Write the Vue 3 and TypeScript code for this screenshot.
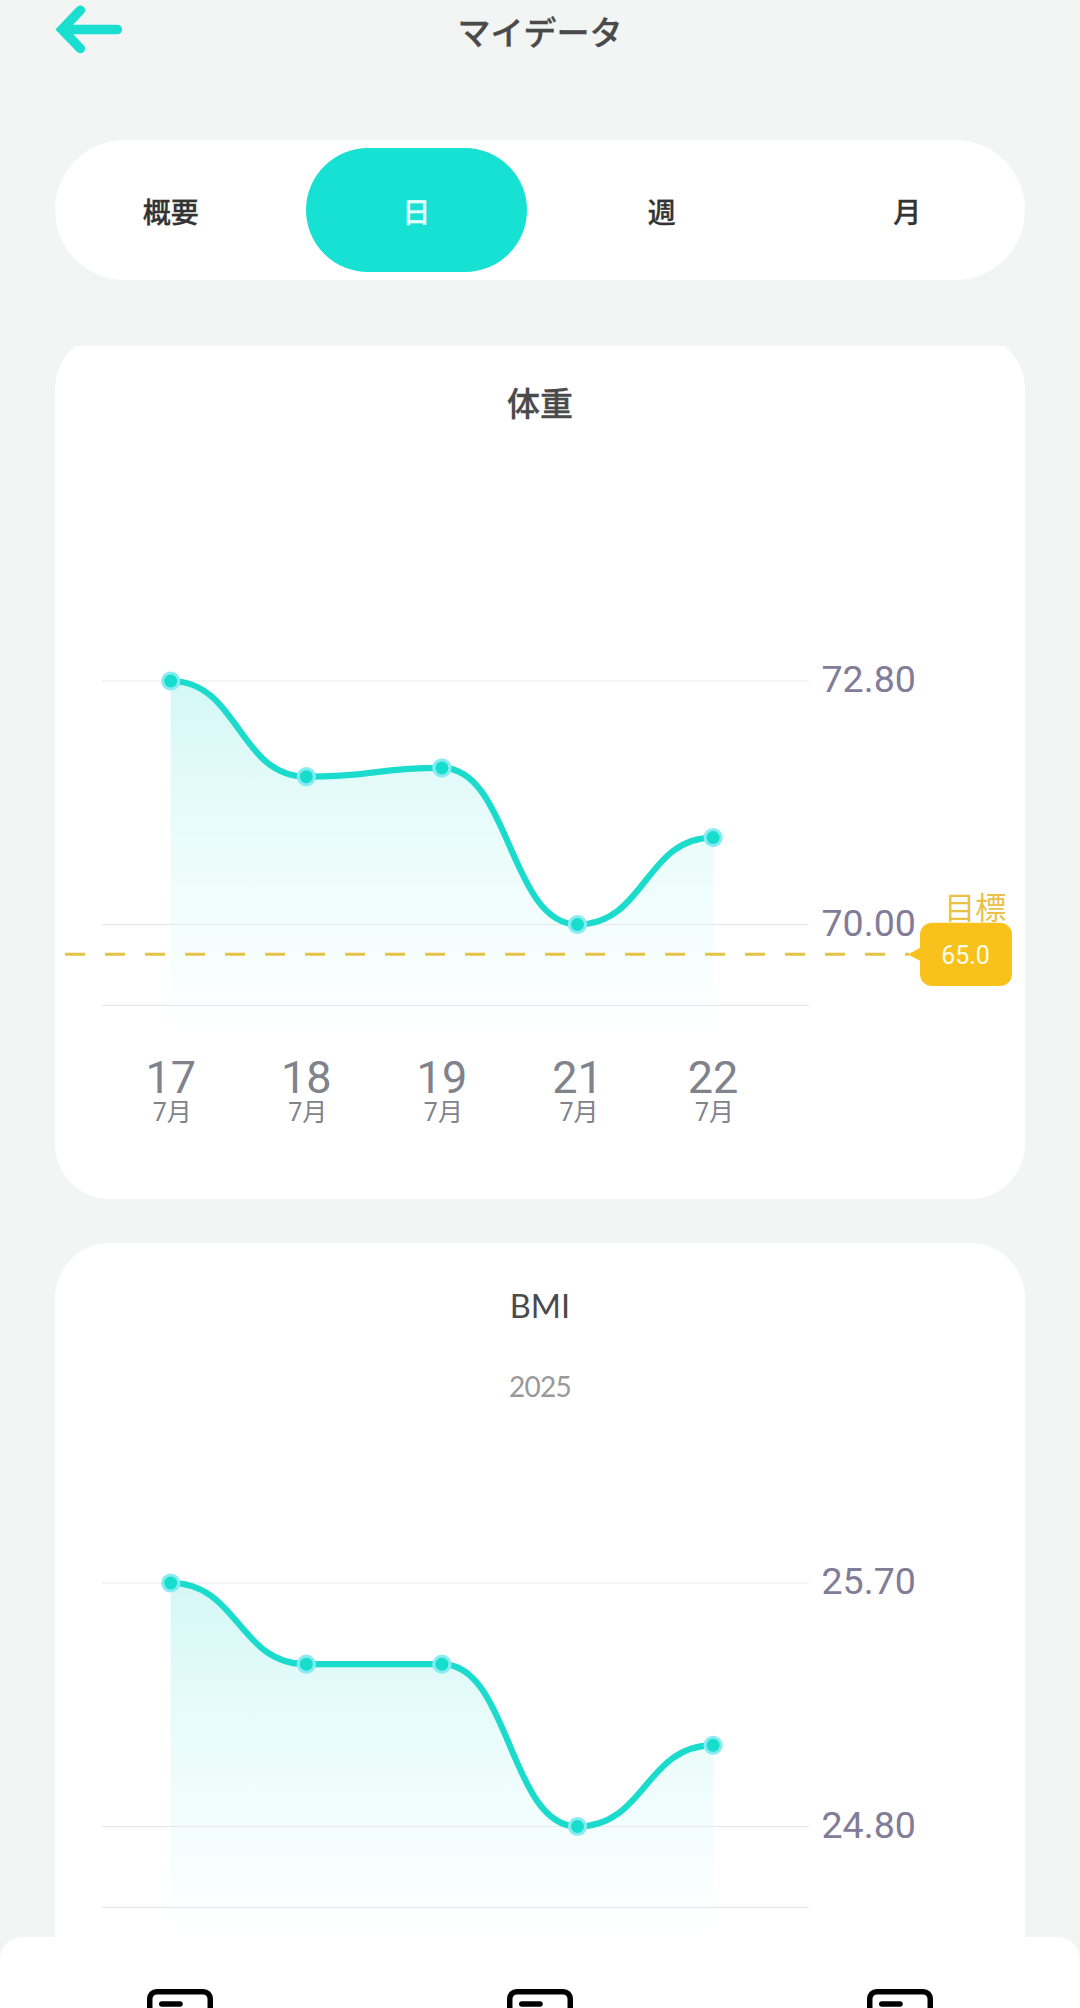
<script setup lang="ts">
interface Chart {
  id: string
  title: string
  subtitle?: string
  values: number[]
  max: number
  min: number
  days: number[]
  goal?: string
}

const tabs: string[] = ['概要', '日', '週', '月']
const activeTab = '日'

const charts: Chart[] = [
  {
    id: 'weight',
    title: '体重',
    values: [72.8, 71.7, 71.8, 70, 71],
    max: 72.8,
    min: 70,
    days: [17, 18, 19, 21, 22],
    goal: '65.0',
  },
  {
    id: 'bmi',
    title: 'BMI',
    subtitle: '2025',
    values: [25.7, 25.4, 25.4, 24.8, 25.1],
    max: 25.7,
    min: 24.8,
    days: [],
  },
]

// Plot geometry, in the drawing's own units
const TOP = 41
const SPAN = 243.5
const BASE = 395
const xAt = (i: number): number => 115.7 + i * 135.6

function points(chart: Chart): { x: number; y: number }[] {
  return chart.values.map((v, i) => ({
    x: xAt(i),
    y: TOP + ((chart.max - v) / (chart.max - chart.min)) * SPAN,
  }))
}

function linePath(chart: Chart): string {
  const pts = points(chart)
  let d = `M${pts[0].x} ${pts[0].y}`
  for (let i = 1; i < pts.length; i++) {
    const mid = (pts[i - 1].x + pts[i].x) / 2
    d += ` C${mid} ${pts[i - 1].y} ${mid} ${pts[i].y} ${pts[i].x} ${pts[i].y}`
  }
  return d
}

function areaPath(chart: Chart): string {
  return `${linePath(chart)} V${BASE} H${xAt(0)} Z`
}
</script>

<template>
  <div class="screen">
    <header class="header">
      <button class="back" aria-label="戻る">
        <svg width="68" height="50" viewBox="0 0 68 50">
          <path d="M25.3 5.3 L7 24.5 L25.3 43.5 M9 24.5 H62.3" fill="none" stroke="#1adfd0" stroke-width="9.6" stroke-linecap="round" stroke-linejoin="miter" />
        </svg>
      </button>
      <h1 class="heading">マイデータ</h1>
    </header>

    <nav class="tabs">
      <button v-for="tab in tabs" :key="tab" class="tab" :class="{ active: tab === activeTab }">{{ tab }}</button>
    </nav>

    <main class="list">
      <section v-for="chart in charts" :key="chart.id" class="card" :class="chart.id">
        <h2 class="title">{{ chart.title }}</h2>
        <p class="subtitle">{{ chart.subtitle }}</p>
        <svg class="chart" width="970" height="500" viewBox="0 0 970 500">
          <defs>
            <linearGradient :id="`fill-${chart.id}`" gradientUnits="userSpaceOnUse" x1="0" :y1="TOP" x2="0" :y2="BASE">
              <stop offset="0" stop-color="#d4f8f6" />
              <stop offset="0.35" stop-color="#e6fbfa" />
              <stop offset="0.7" stop-color="#f3fefd" />
              <stop offset="1" stop-color="#ffffff" />
            </linearGradient>
          </defs>
          <path :d="areaPath(chart)" :fill="`url(#fill-${chart.id})`" />
          <rect class="grid top" x="47" y="40" width="707" height="2" />
          <rect class="grid" x="47" y="284" width="707" height="1" />
          <rect class="grid" x="47" y="365" width="707" height="1" />
          <path :d="linePath(chart)" fill="none" stroke="#1bdccc" stroke-width="6.2" />
          <g v-for="(p, i) in points(chart)" :key="i">
            <circle :cx="p.x" :cy="p.y" r="9.6" fill="#88ebf3" />
            <circle :cx="p.x" :cy="p.y" r="6.5" fill="#17ddcc" />
          </g>
          <text class="y-label" x="766.5" y="52">{{ chart.max.toFixed(2) }}</text>
          <text class="y-label" x="766.5" y="295.7">{{ chart.min.toFixed(2) }}</text>
          <g v-for="(day, i) in chart.days" :key="day">
            <text class="day" :x="xAt(i)" y="453">{{ day }}</text>
            <text class="month" :x="xAt(i) + 1.5" y="480.5">7月</text>
          </g>
          <g v-if="chart.goal">
            <path d="M10 314.3 H854" stroke="#e6c245" stroke-width="3" stroke-dasharray="20 20" />
            <text class="goal-label" x="920.3" y="279">目標</text>
            <path d="M853 314.5 L865.5 307.5 V321 Z" fill="#f8c11c" />
            <rect x="865" y="282.7" width="92" height="63.3" rx="12" fill="#f8c11c" />
            <text class="goal-value" x="910.5" y="324">{{ chart.goal }}</text>
          </g>
        </svg>
      </section>
    </main>

    <footer class="bottom-bar">
      <div v-for="n in 3" :key="n" class="bar-item">
        <svg width="66" height="66" viewBox="0 0 66 66">
          <rect x="2.75" y="2.75" width="60.5" height="60.5" rx="7" fill="none" stroke="#000" stroke-width="5.5" />
          <path d="M14.75 15 H33" stroke="#000" stroke-width="5.5" stroke-linecap="round" />
        </svg>
      </div>
    </footer>
  </div>
</template>

<style>
body {
  margin: 0;
  background: #f3f5f4;
}
</style>

<style scoped>
.screen {
  position: relative;
  display: flex;
  flex-direction: column;
  box-sizing: border-box;
  width: 1080px;
  height: 2008px;
  overflow: hidden;
  background: #f3f5f4;
  font-family: Roboto, "Noto Sans CJK JP", sans-serif;
}

button {
  padding: 0;
  border: 0;
  background: none;
  font: inherit;
}

.header {
  display: grid;
  grid-template-columns: 200px 1fr 200px;
  height: 60px;
  flex: none;
}

.back {
  display: flex;
  padding: 5px 0 0 55px;
}

.heading {
  margin: 6.5px 0 0;
  text-align: center;
  font-family: "Noto Sans CJK JP", sans-serif;
  font-size: 33px;
  line-height: 48px;
  font-weight: 500;
  color: #4a4a4a;
  -webkit-text-stroke: 0.3px #4a4a4a;
}

.tabs {
  display: flex;
  flex: none;
  justify-content: center;
  align-items: center;
  gap: 24.5px;
  height: 140px;
  margin: 80px 55px 0;
  padding-right: 2px;
  box-sizing: border-box;
  border-radius: 70px;
  background: #fff;
}

.tab {
  flex: none;
  width: 221px;
  height: 124px;
  padding-top: 1px;
  border-radius: 62px;
  font-family: "Noto Sans CJK JP", sans-serif;
  font-size: 28px;
  font-weight: 500;
  color: #333;
  -webkit-text-stroke: 0.3px currentColor;
}

.tab.active {
  background: #16e1d2;
  color: #e6fffd;
}

.list {
  display: flex;
  flex-direction: column;
  flex: 1;
  margin-top: 66px;
  min-height: 0;
  overflow: hidden;
}

.card {
  flex: none;
  height: 865px;
  margin: 0 55px 44px;
  border-radius: 55px;
  background: #fff;
  overflow: hidden;
}

.card.weight {
  margin-top: -12px;
}

.title {
  margin: 44px 0 0;
  height: 48px;
  text-align: center;
  font-family: "Noto Sans CJK JP", sans-serif;
  font-size: 33px;
  line-height: 48px;
  font-weight: 500;
  color: #4a4a4a;
  -webkit-text-stroke: 0.3px #4a4a4a;
}

.subtitle {
  height: 36px;
  margin: 33px 0 0;
  text-align: center;
  font-family: Lato, sans-serif;
  font-size: 28px;
  line-height: 36px;
  letter-spacing: -0.7px;
  color: #999;
}

.chart {
  display: block;
  margin-top: 145px;
}

.bmi .title {
  margin-top: 38.5px;
  font-family: Lato, sans-serif;
  font-size: 32.5px;
  font-weight: 400;
  -webkit-text-stroke: 0;
}

.bmi .subtitle {
  margin-top: 38px;
}

.bmi .chart {
  margin-top: 138.5px;
}

.grid {
  fill: #e4e8e8;
}

.grid.top {
  fill: #f3f4f4;
}

.y-label {
  font-size: 37.6px;
  fill: #827c98;
}

.day {
  font-size: 45px;
  fill: #80838b;
  text-anchor: middle;
}

.month {
  font-size: 25px;
  fill: #80838b;
  text-anchor: middle;
}

.goal-label {
  font-size: 31px;
  fill: #eac146;
  text-anchor: middle;
}

.goal-value {
  font-size: 25px;
  fill: #fffde6;
  text-anchor: middle;
}

.bottom-bar {
  position: absolute;
  left: 0;
  right: 0;
  bottom: 0;
  display: flex;
  height: 71px;
  border-radius: 22px 22px 0 0;
  background: #fff;
  overflow: hidden;
}

.bar-item {
  display: flex;
  flex: 1;
  justify-content: center;
  padding-top: 52px;
}
</style>
